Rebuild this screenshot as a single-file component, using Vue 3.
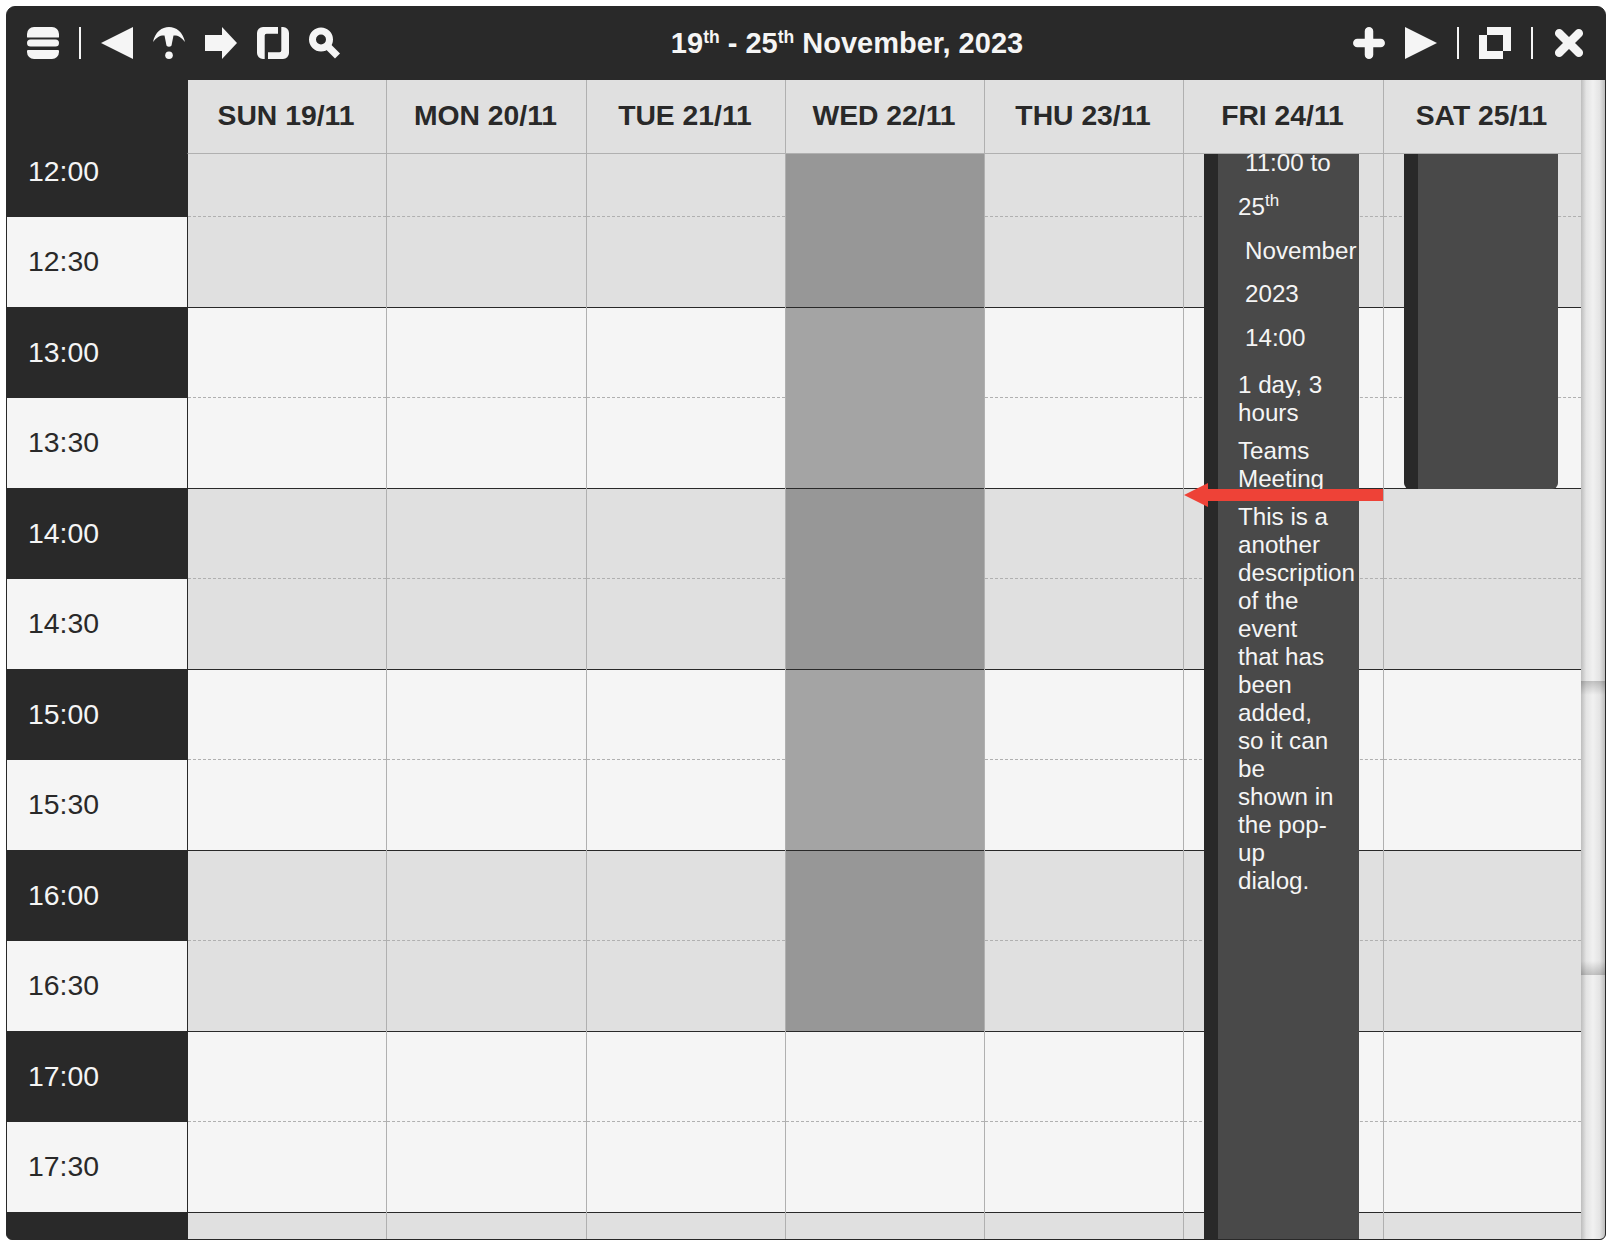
<script setup>
const days = ['SUN 19/11', 'MON 20/11', 'TUE 21/11', 'WED 22/11', 'THU 23/11', 'FRI 24/11', 'SAT 25/11']
const hours = ['12', '13', '14', '15', '16', '17', '18']
const labelled = hours.slice(0, 6)
const isToday = (d, h) => d === 3 && h <= 4
</script>

<template>
  <div class="window">
    <header class="toolbar">
      <div class="group">
        <svg class="icon" viewBox="0 0 32 32"><path d="M0 10V7A7 7 0 0 1 7 0H25A7 7 0 0 1 32 7V10Q32 10.500 31 10.500H1Q0 10.500 0 10ZM3.500 12.500H28.500A3.500 3.500 0 0 1 28.500 19.500H3.500A3.500 3.500 0 0 1 3.500 12.500ZM1 23H31Q32 23 32 24V25A7 7 0 0 1 25 32H7A7 7 0 0 1 0 25V24Q0 23 1 23Z" /></svg>
        <span class="sep"></span>
        <svg class="icon" viewBox="0 0 32 32"><polygon points="0,16 32,0 32,32" /></svg>
        <svg class="icon" viewBox="0 0 32 32"><path d="M0 15C2 5 9 0 16 0C23 0 30 5 32 15C28 9.500 24 8 20.500 8.500L18.800 17A2.800 2.800 0 0 1 13.200 17L11.500 8.500C8 8 4 9.500 0 15Z" /><circle cx="16" cy="28.200" r="3.800" /></svg>
        <svg class="icon" viewBox="0 0 32 32"><polygon points="0,8 17,8 17,0 32,16 17,32 17,24 0,24" /></svg>
        <svg class="icon" viewBox="0 0 32 32"><path d="M6 0H21V6.700H9.500Q7.700 6.700 7.700 8.500V32H6A6 6 0 0 1 0 26V6A6 6 0 0 1 6 0ZM24.300 0H26A6 6 0 0 1 32 6V26A6 6 0 0 1 26 32H11V25.300H22.500Q24.300 25.300 24.300 23.500Z" /></svg>
        <svg class="icon" viewBox="0 0 32 32"><circle class="line" cx="12" cy="12.500" r="8.500" stroke-width="7" /><path class="line" d="M18 18.500L28.500 29" stroke-width="7" /></svg>
      </div>
      <h1 class="title">19<sup>th</sup> - 25<sup>th</sup> November, 2023</h1>
      <div class="group">
        <svg class="icon" viewBox="0 0 32 32"><path class="line round" d="M4.300 16H27.700M16 4.300V27.700" stroke-width="8.500" /></svg>
        <svg class="icon" viewBox="0 0 32 32"><polygon points="0,0 32,16 0,32" /></svg>
        <span class="sep"></span>
        <svg class="icon" viewBox="0 0 32 32"><path fill-rule="evenodd" d="M8 0H32V24H24V32H0V8H8ZM8 8V24H24V8Z" /></svg>
        <span class="sep"></span>
        <svg class="icon" viewBox="0 0 32 32"><path class="line round" d="M6.200 6.200L25.800 25.800M25.800 6.200L6.200 25.800" stroke-width="8.500" /></svg>
      </div>
    </header>

    <div class="main">
      <div class="cal">
        <div class="head">
          <div class="corner"></div>
          <div class="day-grid">
            <div v-for="d in days" :key="d" class="day-head">{{ d }}</div>
          </div>
        </div>
        <div class="scroller">
          <div class="scroll-inner">
            <div class="gutter">
              <template v-for="h in labelled" :key="h">
                <div class="time dark">{{ h }}:00</div>
                <div class="time light">{{ h }}:30</div>
              </template>
              <div class="time dark"></div>
            </div>
            <div class="day-grid body">
              <template v-for="(h, hi) in hours" :key="h">
                <div
                  v-for="(d, di) in days"
                  :key="d"
                  class="cell"
                  :class="{ grey: hi % 2 === 0, today: isToday(di, hi) }"
                >
                  <div class="half top"></div>
                  <div class="half bottom"></div>
                </div>
              </template>

              <article class="event fri">
                <div class="when lead">11:00 to</div>
                <div class="when">25<sup>th</sup></div>
                <div class="when lead">November</div>
                <div class="when lead">2023</div>
                <div class="when lead">14:00</div>
                <p class="duration">1 day, 3 hours</p>
                <p class="name">Teams Meeting</p>
                <p class="desc">This is a another description of the event that has been added, so it can be shown in the pop-up dialog.</p>
              </article>
              <article class="event sat"></article>

              <svg class="arrow" viewBox="0 0 199 24"><polygon points="0,12 24,0 24,6 199,6 199,18 24,18 24,24" /></svg>
            </div>
          </div>
        </div>
      </div>
      <div class="scrollbar">
        <div class="thumb"></div>
      </div>
    </div>
  </div>
</template>

<style>
body {
  background: #fff;
}
</style>

<style scoped>
.window {
  box-sizing: border-box;
  width: 1600px;
  height: 1234px;
  margin: 6px 0 0 6px;
  border: 1px solid #292929;
  border-radius: 9px 9px 6px 6px;
  overflow: hidden;
  display: flex;
  flex-direction: column;
  background: #292929;
  font-family: "Liberation Sans", Arial, sans-serif;
}

.toolbar {
  flex: none;
  height: 73px;
  box-sizing: border-box;
  padding: 0 20px 1px;
  display: flex;
  align-items: center;
}

.group {
  display: flex;
  align-items: center;
  gap: 20px;
}

.icon {
  width: 32px;
  height: 32px;
  fill: #f5f5f5;
  display: block;
}

.line {
  fill: none;
  stroke: #f5f5f5;
}

.round {
  stroke-linecap: round;
}

.sep {
  width: 2px;
  height: 32px;
  background: #f5f5f5;
}

.title {
  flex: 1;
  margin: 0;
  text-align: center;
  font-size: 29px;
  font-weight: 700;
  line-height: 32px;
  color: #f5f5f5;
}

.title sup {
  font-size: 17.5px;
  line-height: 0;
  vertical-align: 10px;
}

.main {
  flex: 1;
  min-height: 0;
  display: flex;
}

.cal {
  width: 1574px;
  display: flex;
  flex-direction: column;
}

.head {
  flex: none;
  display: flex;
  height: 74px;
}

.corner {
  width: 180px;
  flex: none;
}

.day-grid {
  display: grid;
  grid-template-columns: 199px 200px 199px 199px 199px 200px 198px;
  width: 1394px;
  flex: none;
}

.day-head {
  box-sizing: border-box;
  height: 74px;
  padding-right: 2px;
  border-left: 1px solid #b0b0b0;
  border-bottom: 1px solid #b0b0b0;
  background: #e0e0e0;
  color: #292929;
  font-size: 28.3px;
  font-weight: 700;
  line-height: 71px;
  text-align: center;
}

.day-head:first-child,
.cell:nth-child(7n + 1) {
  border-left-color: #292929;
}

.scroller {
  flex: 1;
  min-height: 0;
  overflow: hidden;
}

.scroll-inner {
  display: flex;
  margin-top: -28px;
}

.gutter {
  width: 180px;
  flex: none;
}

.time {
  box-sizing: border-box;
  padding-left: 21px;
  font-size: 28.4px;
}

.dark {
  height: 91px;
  line-height: 90px;
  background: #292929;
  color: #f5f5f5;
}

.light {
  height: 90px;
  line-height: 89px;
  background: #f5f5f5;
  color: #292929;
}

.body {
  position: relative;
  margin-top: 1px;
  height: 1267px;
  align-content: start;
}

.cell {
  box-sizing: border-box;
  height: 181px;
  border-left: 1px solid #b0b0b0;
  background: #f5f5f5;
}

.cell.grey {
  background: #e0e0e0;
}

.cell.today {
  background: #a4a4a4;
}

.cell.today.grey {
  background: #979797;
}

.half {
  box-sizing: border-box;
}

.top {
  height: 90px;
  border-bottom: 1px dashed #b0b0b0;
}

.bottom {
  height: 91px;
  border-bottom: 1px solid #292929;
}

.today .top {
  border-bottom-color: transparent;
}

.event {
  position: absolute;
  top: 0;
  box-sizing: border-box;
  border-left: 14px solid #292929;
  background: #494949;
  color: #f5f5f5;
  font-size: 24.2px;
  line-height: 28px;
}

.fri {
  left: 1017px;
  width: 155px;
  height: 1200px;
  padding: 14px 23px 0 20px;
}

.sat {
  left: 1217px;
  width: 154px;
  height: 362px;
  border-radius: 0 0 6px 6px;
}

.when {
  height: 43.75px;
  line-height: 44px;
  white-space: nowrap;
}

.when sup {
  font-size: 17px;
  line-height: 0;
  vertical-align: 9px;
}

.lead {
  padding-left: 7px;
}

.event p {
  margin: 10px 0 0;
}

.event .duration {
  margin-top: 11px;
}

.arrow {
  position: absolute;
  left: 997px;
  top: 356px;
  width: 199px;
  height: 24px;
  fill: #ee4237;
}

.scrollbar {
  width: 24px;
  flex: none;
  background: linear-gradient(90deg, #bdbdbd 0, #e4e4e4 22%, #f1f1f1 50%, #e4e4e4 78%, #bdbdbd 100%);
}

.thumb {
  margin-top: 601px;
  height: 294px;
  background: linear-gradient(180deg, rgba(0, 0, 0, 0.2) 0, rgba(0, 0, 0, 0) 14px, rgba(0, 0, 0, 0) 280px, rgba(0, 0, 0, 0.2) 100%);
}
</style>
